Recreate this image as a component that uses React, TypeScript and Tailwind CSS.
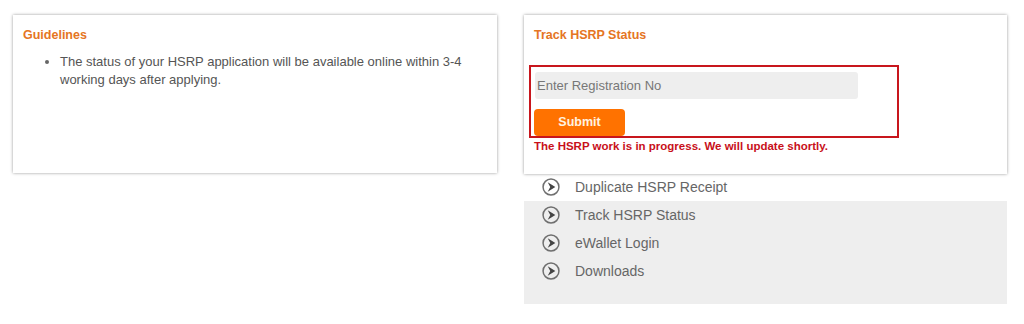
const links = [
  "Duplicate HSRP Receipt",
  "Track HSRP Status",
  "eWallet Login",
  "Downloads",
];

function ArrowIcon() {
  return (
    <svg width="18" height="18" viewBox="0 0 17 17" className="shrink-0">
      <circle cx="8.5" cy="8.5" r="7.5" fill="none" stroke="#6f6f6f" strokeWidth="1.4" />
      <path d="M5.4 4.1 L12.6 8.5 L5.4 12.9 L7.8 8.5 Z" fill="#444" />
    </svg>
  );
}

function LinkRow({ label, first }: { label: string; first?: boolean }) {
  return (
    <li
      className={`flex items-center pl-[18px] ${
        first ? "h-[27px] pb-[1px] bg-white" : "h-[28px]"
      }`}
    >
      <ArrowIcon />
      <span className="ml-[15px] text-[14px] text-[#666]">{label}</span>
    </li>
  );
}

export default function App() {
  return (
    <div className="bg-white w-[1024px] h-[324px] pt-[15px] pl-[13px] font-['Liberation_Sans',Arial,sans-serif]">
      <div className="flex gap-[27px] items-start">
        {/* Guidelines */}
        <div className="w-[484px] h-[158px] bg-white shadow-[0_0_3px_rgba(0,0,0,0.4)] px-[10px] pt-[12px]">
          <h3 className="text-[12.5px] leading-[16px] font-bold text-[#e57523]">
            Guidelines
          </h3>
          <ul className="list-disc pl-[37px] mt-[10px] pr-[20px] text-[13px] leading-[18px] text-[#555] marker:text-[#666]">
            <li>
              The status of your HSRP application will be available online within 3-4
              working days after applying.
            </li>
          </ul>
        </div>

        {/* Track status */}
        <div className="w-[483px] flex flex-col">
          <div className="relative z-10 h-[159px] bg-white shadow-[0_0_3px_rgba(0,0,0,0.4)] px-[5px] pt-[12px]">
            <h3 className="pl-[5px] text-[12.5px] leading-[16px] font-bold text-[#e57523]">
              Track HSRP Status
            </h3>
            <div className="mt-[22px] w-[370px] h-[73px] border-2 border-[#c8161d] pl-[4px] pt-[5px]">
              <input
                placeholder="Enter Registration No"
                className="block w-[323px] h-[27px] rounded-[3px] bg-[#eeeeee] px-[2px] text-[13px] text-[#555] placeholder:text-[#777] outline-none"
              />
              <button className="mt-[10px] -ml-[1px] w-[91px] h-[27px] rounded-[4px] bg-[#ff7200] text-[12.5px] font-bold text-[#fff2e0]">
                Submit
              </button>
            </div>
            <p className="pl-[5px] mt-[1px] text-[11.5px] leading-[14px] font-bold text-[#c8101a]">
              The HSRP work is in progress. We will update shortly.
            </p>
          </div>
          <ul className="bg-[#eeeeee] pb-[19px]">
            {links.map((l, i) => (
              <LinkRow key={l} label={l} first={i === 0} />
            ))}
          </ul>
        </div>
      </div>
    </div>
  );
}
